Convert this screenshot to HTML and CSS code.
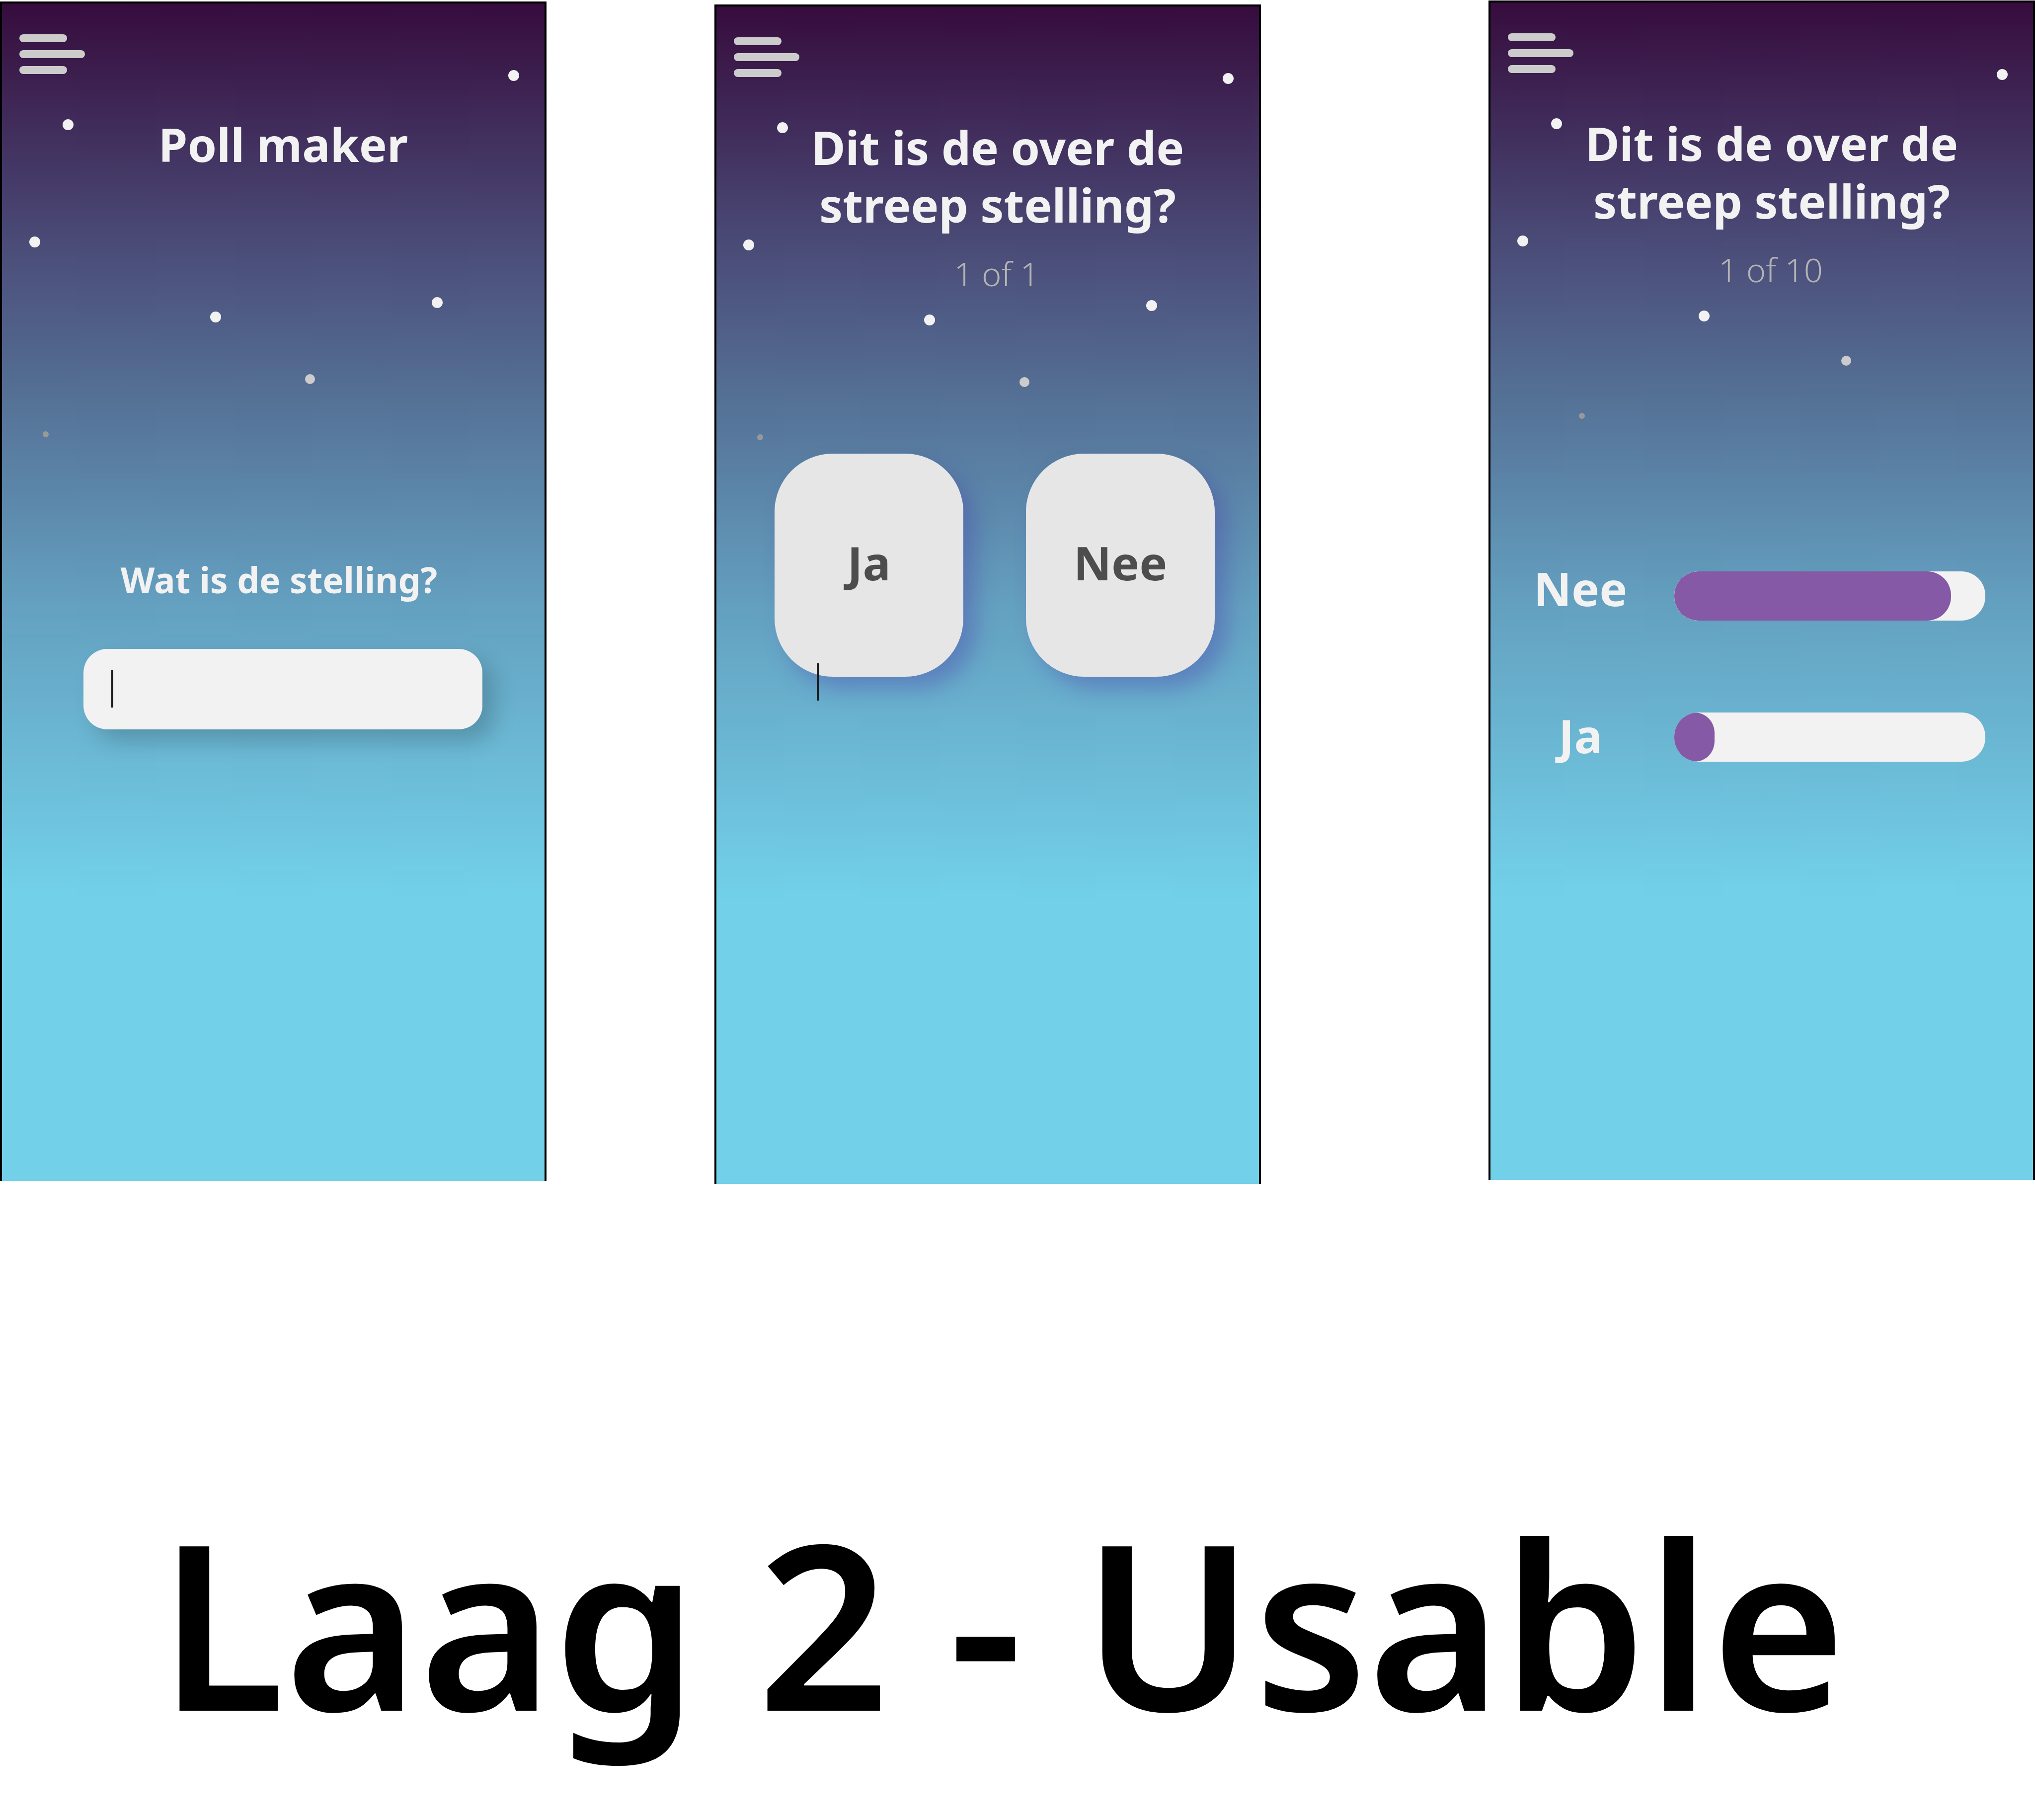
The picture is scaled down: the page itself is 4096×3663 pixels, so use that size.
FILE: index.html
```html
<!DOCTYPE html>
<html lang="nl">
<head>
<meta charset="utf-8">
<title>Laag 2 - Usable</title>
<link rel="stylesheet" href="styles.css">
</head>
<body>
<main class="screens">
  <section class="phone phone-maker">
    <svg class="sky" viewBox="4 4 1092 900" aria-hidden="true">
      <g class="star"><circle cx="1034" cy="149" r="11"/><circle cx="137" cy="248" r="11"/><circle cx="70" cy="484" r="11"/><circle cx="434" cy="635" r="11"/><circle cx="880" cy="606" r="11"/></g>
      <circle class="star-dim" cx="624" cy="760" r="10"/>
      <circle class="star-faint" cx="92" cy="871" r="6"/>
    </svg>
    <button class="menu" type="button" aria-label="Menu"><span class="line"></span><span class="line line-long"></span><span class="line"></span></button>
    <h2 class="title">Poll maker</h2>
    <form class="question">
      <label class="question-label" for="stelling">Wat is de stelling?</label>
      <div class="field">
        <input class="field-input" id="stelling" type="text">
        <span class="caret field-caret"></span>
      </div>
    </form>
  </section>

  <section class="phone phone-vote">
    <svg class="sky" viewBox="4 4 1092 900" aria-hidden="true">
      <g class="star"><circle cx="1034" cy="149" r="11"/><circle cx="137" cy="248" r="11"/><circle cx="69" cy="484" r="11"/><circle cx="433" cy="635" r="11"/><circle cx="880" cy="606" r="11"/></g>
      <circle class="star-dim" cx="624" cy="760" r="10"/>
      <circle class="star-faint" cx="92" cy="871" r="6"/>
    </svg>
    <button class="menu" type="button" aria-label="Menu"><span class="line"></span><span class="line line-long"></span><span class="line"></span></button>
    <h2 class="title">Dit is de over de<br>streep stelling?</h2>
    <p class="count">1 of 1</p>
    <div class="answers">
      <button class="answer" type="button">Ja</button>
      <button class="answer" type="button">Nee</button>
      <span class="caret answers-caret"></span>
    </div>
  </section>

  <section class="phone phone-result">
    <svg class="sky" viewBox="4 4 1092 900" aria-hidden="true">
      <g class="star"><circle cx="1034" cy="149" r="11"/><circle cx="137" cy="248" r="11"/><circle cx="69" cy="484" r="11"/><circle cx="434" cy="635" r="11"/></g>
      <circle class="star-dim" cx="720" cy="725" r="10"/>
      <circle class="star-faint" cx="188" cy="836" r="6"/>
    </svg>
    <button class="menu" type="button" aria-label="Menu"><span class="line"></span><span class="line line-long"></span><span class="line"></span></button>
    <h2 class="title">Dit is de over de<br>streep stelling?</h2>
    <p class="count">1 of 10</p>
    <div class="results">
      <div class="result-labels">
        <label for="nee">Nee</label>
        <label for="ja">Ja</label>
      </div>
      <div class="result-bars">
        <progress class="bar" id="nee" max="100" value="89"></progress>
        <progress class="bar" id="ja" max="100" value="13"></progress>
      </div>
    </div>
  </section>
</main>
<h1 class="caption">Laag 2 - Usable</h1>
</body>
</html>
```
FILE: styles.css
```css
* {
  box-sizing: border-box;
}

body {
  margin: 0;
  min-height: 100vh;
  background: #fff;
  font-family: "Noto Sans", "Open Sans", sans-serif;
}

.screens {
  display: grid;
  grid-template-columns: 1100fr 338fr 1100fr 458fr 1100fr;
  align-items: start;
}

.phone {
  position: relative;
  aspect-ratio: 1100 / 2374;
  border: 4px solid #000;
  border-bottom: 0;
  background: linear-gradient(#360c3d 0%, #4b4d79 21%, #557297 34%, #64a0c0 51%, #72d1e9 76%);
  color: #f2f2f2;
}

.phone-maker {
  grid-column: 1;
  margin-top: 3px;
}

.phone-vote {
  grid-column: 3;
  margin-top: 9px;
}

.phone-result {
  grid-column: 5;
  margin-top: 1px;
}

.sky {
  position: absolute;
  top: 0;
  left: 0;
  width: 100%;
}

.star {
  fill: #f2f2f2;
}

.star-dim {
  fill: #ccc;
}

.star-faint {
  fill: #999;
}

.menu {
  position: relative;
  display: flex;
  flex-direction: column;
  gap: 16px;
  margin: 62px 0 0 35px;
  padding: 0;
  border: 0;
  background: none;
}

.line {
  width: 96px;
  height: 16px;
  border-radius: 8px;
  background: #ccc;
}

.line-long {
  width: 132px;
}

.title {
  position: relative;
  margin: 83px 0 0;
  padding-left: 40px;
  font-size: 94px;
  font-weight: 700;
  line-height: 116px;
  text-align: center;
}

.count {
  position: relative;
  margin: 40px 0 0;
  padding-left: 36px;
  color: #b3b3b3;
  font-size: 67px;
  font-weight: 300;
  line-height: 80px;
  text-align: center;
}

.question {
  display: flex;
  flex-direction: column;
  gap: 96px;
  margin: 776px 125px 0 164px;
}

.question-label {
  padding-right: 16px;
  font-size: 71px;
  font-weight: 700;
  line-height: 86px;
  text-align: center;
}

.field {
  position: relative;
  display: flex;
}

.field-input {
  width: 100%;
  height: 162px;
  padding: 0 56px;
  border: 0;
  border-radius: 48px;
  background: #f2f2f2;
  box-shadow: 24px 24px 44px rgba(0, 0, 0, 0.18);
  font: inherit;
  font-size: 71px;
}

.caret {
  position: absolute;
  width: 4px;
  height: 75px;
  background: #1a1a1a;
}

.field-caret {
  top: 43px;
  left: 56px;
}

.answers {
  position: relative;
  display: grid;
  grid-template-columns: 1fr 1fr;
  gap: 126px;
  margin: 323px 89px 0 117px;
}

.answer {
  height: 449px;
  padding: 0 0 12px;
  border: 0;
  border-radius: 117px;
  background: #e6e6e6;
  box-shadow: 24px 24px 44px rgba(73, 54, 170, 0.35);
  color: #4d4d4d;
  font: inherit;
  font-size: 94px;
  font-weight: 700;
}

.answers-caret {
  top: 422px;
  left: 85px;
}

.results {
  display: grid;
  grid-template-columns: 370fr 626fr 96fr;
  margin-top: 542px;
}

.result-labels {
  display: flex;
  flex-direction: column;
  gap: 180px;
  padding: 2px 8px 0 0;
  font-size: 94px;
  font-weight: 700;
  line-height: 116px;
  text-align: center;
}

.result-bars {
  display: flex;
  flex-direction: column;
  gap: 185px;
  padding-top: 26px;
}

.bar {
  display: block;
  width: 100%;
  height: 99px;
  border: 0;
  border-radius: 48px;
  background: #f2f2f2;
  overflow: hidden;
  appearance: none;
}

.bar::-webkit-progress-bar {
  background: #f2f2f2;
}

.bar::-webkit-progress-value {
  border-radius: 48px;
  background: #8559a5;
}

.caption {
  margin: 595px 0 0;
  padding-left: 320px;
  color: #000;
  font-size: 463px;
  font-weight: 600;
  line-height: 572px;
}
```
